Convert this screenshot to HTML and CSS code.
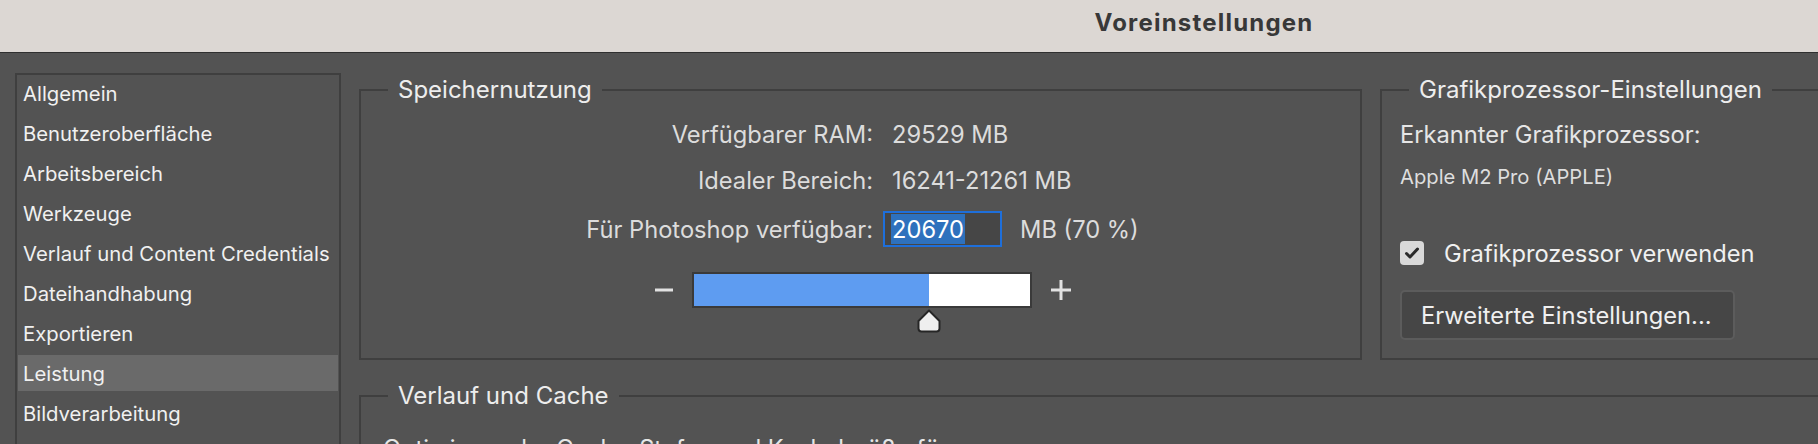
FILE: index.html
```html
<!DOCTYPE html>
<html lang="de">
<head>
<meta charset="utf-8">
<title>Voreinstellungen</title>
<link rel="stylesheet" href="styles.css">
</head>
<body>
<div class="window">
  <header class="titlebar"><h1 class="title">Voreinstellungen</h1></header>
  <div class="main">
    <nav class="sidebar">
      <div class="nav-item">Allgemein</div>
      <div class="nav-item">Benutzeroberfläche</div>
      <div class="nav-item">Arbeitsbereich</div>
      <div class="nav-item">Werkzeuge</div>
      <div class="nav-item">Verlauf und Content Credentials</div>
      <div class="nav-item">Dateihandhabung</div>
      <div class="nav-item">Exportieren</div>
      <div class="nav-item is-active">Leistung</div>
      <div class="nav-item">Bildverarbeitung</div>
    </nav>
    <div class="content">
      <div class="row-top">
        <fieldset class="group group-memory">
          <legend>Speichernutzung</legend>
          <div class="stats">
            <span class="stat-label">Verfügbarer RAM:</span>
            <span class="stat-value">29529 MB</span>
            <span class="stat-label">Idealer Bereich:</span>
            <span class="stat-value">16241-21261 MB</span>
            <span class="stat-label stat-last">Für Photoshop verfügbar:</span>
            <span class="stat-value stat-last stat-input">
              <span class="num-input"><span class="sel">20670</span></span>
              <span class="unit">MB (70 %)</span>
            </span>
          </div>
          <div class="slider">
            <svg class="step" width="20" height="20" viewBox="0 0 20 20"><path d="M1 10H19" stroke="#e2e2e2" stroke-width="3"/></svg>
            <div class="track">
              <div class="fill" style="width:70%"></div>
              <svg class="thumb" width="24" height="24" viewBox="0 0 24 24"><path d="M12 1.5L22.5 12V19.5Q22.5 22.5 19.5 22.5H4.5Q1.5 22.5 1.5 19.5V12Z" fill="#efefef" stroke="#262626" stroke-width="2" stroke-linejoin="round"/></svg>
            </div>
            <svg class="step" width="22" height="22" viewBox="0 0 22 22"><path d="M1 11H21M11 1V21" stroke="#e2e2e2" stroke-width="3"/></svg>
          </div>
        </fieldset>
        <fieldset class="group group-gpu">
          <legend>Grafikprozessor-Einstellungen</legend>
          <div class="gpu-body">
            <div class="gpu-label">Erkannter Grafikprozessor:</div>
            <div class="gpu-name">Apple M2 Pro (APPLE)</div>
            <label class="check-row">
              <span class="checkbox"><svg width="24" height="24" viewBox="0 0 24 24"><path d="M6.5 12.5L10 16L17.5 8" fill="none" stroke="#2a2a2a" stroke-width="3" stroke-linecap="round" stroke-linejoin="round"/></svg></span>
              <span>Grafikprozessor verwenden</span>
            </label>
            <div class="button">Erweiterte Einstellungen...</div>
          </div>
        </fieldset>
      </div>
      <fieldset class="group group-cache">
        <legend>Verlauf und Cache</legend>
        <div class="cache-body">Optimieren der Cache-Stufen und Kachelgröße für:</div>
      </fieldset>
    </div>
  </div>
</div>
</body>
</html>
```
FILE: styles.css
```css
* { box-sizing: border-box; }
html, body { margin: 0; padding: 0; }
body {
  width: 1818px;
  height: 444px;
  overflow: hidden;
  background: #535353;
  font-family: Inter, "Noto Sans", "Liberation Sans", sans-serif;
  color: #e6e6e6;
}
.window { width: 2408px; }
.titlebar {
  height: 53px;
  background: #dcd7d3;
  border-bottom: 1px solid #2f2f2f;
  display: flex;
  align-items: center;
  justify-content: center;
  padding-bottom: 8px;
}
.title {
  margin: 0;
  font-size: 24px;
  font-weight: 700;
  color: #383838;
  letter-spacing: 1.2px;
}
.main {
  display: flex;
  align-items: flex-start;
  padding: 20px 0 0 15px;
  gap: 18px;
}
.sidebar {
  flex: none;
  width: 326px;
  height: 420px;
  border: 2px solid #3f3f3f;
  padding: 0 1px;
}
.nav-item {
  height: 36px;
  margin-bottom: 4px;
  display: flex;
  align-items: center;
  padding-left: 5px;
  font-size: 20.3px;
  color: #f0f0f0;
  white-space: nowrap;
}
.nav-item.is-active { background: #6a6a6a; }
.content {
  flex: none;
  width: 2000px;
  margin-top: 4px;
  display: flex;
  flex-direction: column;
  gap: 23px;
}
.row-top {
  display: flex;
  gap: 18px;
  align-items: stretch;
}
.group {
  margin: 0;
  padding: 0;
  border: 2px solid #3f3f3f;
  min-width: 0;
}
.group > legend {
  margin-left: 27px;
  padding: 0 10px;
  font-size: 24px;
  line-height: 26px;
  color: #ededed;
}
.group-memory {
  flex: none;
  width: 1003px;
  padding-bottom: 50px;
}
.stats {
  display: grid;
  grid-template-columns: 512px max-content;
  grid-template-rows: 46px 46px auto;
  column-gap: 19px;
  align-items: center;
  padding-top: 8px;
  font-size: 23.7px;
  color: #dcdcdc;
}
.stat-label { justify-self: end; white-space: nowrap; }
.stat-value { white-space: nowrap; }
.stat-last { margin-top: 8px; }
.stat-input {
  display: flex;
  align-items: center;
  gap: 18px;
  margin-left: -9px;
}
.num-input {
  width: 119px;
  height: 36px;
  border: 2px solid #1e6fdb;
  background: #464646;
  padding: 1px 0 1px 6px;
  display: flex;
}
.sel {
  background: #2e71bd;
  color: #ffffff;
  padding: 0 1px;
  display: flex;
  align-items: center;
}
.slider {
  margin-top: 25px;
  padding-left: 4px;
  display: flex;
  align-items: center;
  justify-content: center;
  gap: 18px;
}
.step { flex: none; display: block; }
.track {
  position: relative;
  width: 340px;
  height: 36px;
  border: 2px solid #3a3a3a;
  background: #ffffff;
}
.fill {
  height: 100%;
  background: #5e9cf1;
}
.thumb {
  position: absolute;
  display: block;
  top: calc(100% + 3px);
  left: calc(70% - 12px);
}
.group-gpu {
  flex: none;
  width: 700px;
}
.gpu-body {
  padding: 20px 0 18px 18px;
  font-size: 23.7px;
  color: #e6e6e6;
}
.gpu-label { line-height: 24px; white-space: nowrap; }
.gpu-name {
  margin-top: 18px;
  line-height: 24px;
  font-size: 20.2px;
  color: #dedede;
}
.check-row {
  margin-top: 52px;
  height: 24px;
  display: flex;
  align-items: center;
  gap: 20px;
  color: #f0f0f0;
}
.checkbox {
  width: 24px;
  height: 24px;
  border-radius: 4px;
  background: #d9d9d9;
  display: block;
}
.checkbox svg { display: block; }
.button {
  margin-top: 25px;
  width: 335px;
  height: 50px;
  border: 2px solid #5c5c5c;
  border-radius: 5px;
  background: #464646;
  display: flex;
  align-items: center;
  padding-left: 19px;
  color: #f0f0f0;
  white-space: nowrap;
}
.group-cache {
  width: 2000px;
  height: 200px;
}
.cache-body {
  padding: 28px 0 0 22px;
  font-size: 23.7px;
  line-height: 24px;
  color: #e6e6e6;
}
```
